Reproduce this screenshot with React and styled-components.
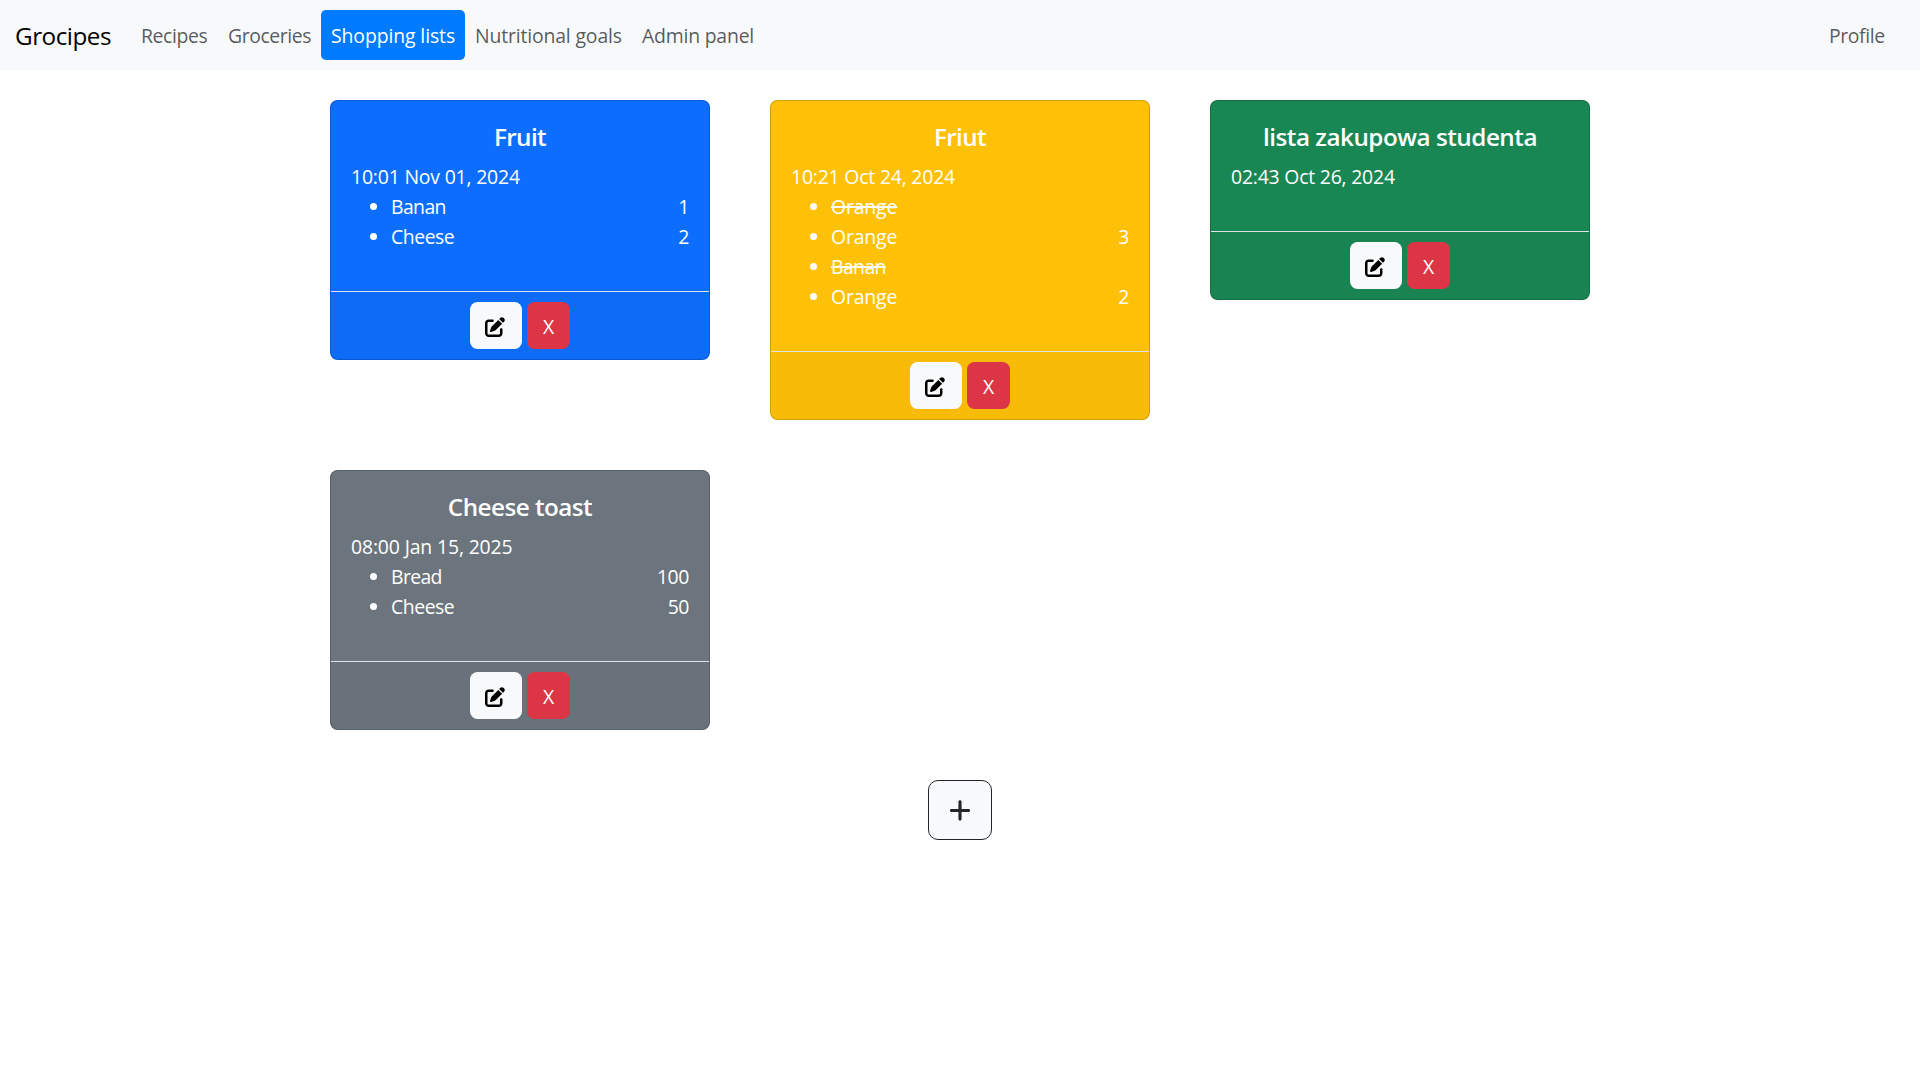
import React from "react";
import styled, { createGlobalStyle } from "styled-components";
import { FaPenToSquare, FaPlus } from "react-icons/fa6";

const GlobalStyle = createGlobalStyle`
  *, *::before, *::after { box-sizing: border-box; }
  body {
    margin: 0;
    background: #fff;
    color: #212529;
    font-family: "Open Sans", "Noto Sans", sans-serif;
    font-size: 19.4px;
    line-height: 30px;
  }
`;

const Navbar = styled.nav`
  display: flex;
  align-items: center;
  height: 70px;
  padding: 10px 25px 10px 15px;
  background: #f8f9fa;
`;

const Brand = styled.a`
  width: 96px;
  margin-right: 20px;
  padding-top: 2px;
  color: #000;
  font-size: 24.25px;
  line-height: 38px;
  letter-spacing: -0.49px;
  white-space: nowrap;
`;

const NavLinks = styled.div`
  display: flex;
  flex: 1;
`;

const NavLink = styled.a`
  width: ${(p) => p.$width}px;
  height: 50px;
  padding: 11px 10px 9px;
  border-radius: 5px;
  white-space: nowrap;
  letter-spacing: ${(p) => p.$track}px;
  color: ${(p) => (p.$active ? "#fff" : "rgba(33, 37, 41, 0.75)")};
  background: ${(p) => (p.$active ? "#007bff" : "transparent")};
`;

const Board = styled.main`
  display: grid;
  grid-template-columns: repeat(3, 380px);
  column-gap: 60px;
  row-gap: 50px;
  align-items: start;
  width: 1260px;
  margin: 30px auto 50px;
`;

const Card = styled.article`
  display: flex;
  flex-direction: column;
  border: 1px solid rgba(0, 0, 0, 0.175);
  border-radius: 7.5px;
  background: ${(p) => p.$color};
  color: #fff;
`;

const CardBody = styled.div`
  padding: 21px 20px 19px;
`;

const CardTitle = styled.h5`
  margin: 0 0 10px;
  font-size: 24.25px;
  font-weight: 600;
  line-height: 30px;
  text-align: center;
  letter-spacing: ${(p) => p.$track}px;
`;

const CardDate = styled.div`
  letter-spacing: ${(p) => p.$track}px;
`;

const ItemList = styled.ul`
  margin: 0 0 20px;
  padding: 0 0 0 40px;
`;

const Item = styled.li`
  height: 30px;
`;

const ItemLine = styled.div`
  display: flex;
  justify-content: space-between;
`;

const ItemName = styled.span`
  letter-spacing: ${(p) => p.$track}px;
  text-decoration: ${(p) => (p.$done ? "line-through 2px" : "none")};
`;

const Amount = styled.span`
  letter-spacing: -0.4px;
`;

const CardFooter = styled.footer`
  display: flex;
  justify-content: center;
  gap: 5px;
  padding: 10px;
  border-top: 1px solid #dee2e6;
  border-radius: 0 0 6.5px 6.5px;
  background: rgba(33, 37, 41, 0.03);
`;

const Button = styled.button`
  display: flex;
  align-items: center;
  justify-content: center;
  width: ${(p) => p.$width}px;
  height: 47px;
  padding: ${(p) => (p.$danger ? "2px 0 0" : "2px 2px 0 0")};
  border: 0;
  border-radius: 7.5px;
  font: inherit;
  color: ${(p) => (p.$danger ? "#fff" : "#000")};
  background: ${(p) => (p.$danger ? "#dc3545" : "#f8f9fa")};
`;

const AddRow = styled.div`
  display: flex;
  justify-content: center;
`;

const AddButton = styled.button`
  display: flex;
  align-items: center;
  justify-content: center;
  width: 64px;
  height: 60px;
  padding: 1px 0 0;
  border: 1px solid #212529;
  border-radius: 10px;
  background: #f8f9fa;
  color: #212529;
`;

const PlusIcon = styled(FaPlus)`
  width: 26px;
  height: 25px;
`;

const links = [
  { label: "Recipes", width: 87, track: -0.38 },
  { label: "Groceries", width: 103, track: -0.42 },
  { label: "Shopping lists", width: 144, track: -0.1, active: true },
  { label: "Nutritional goals", width: 167, track: -0.15 },
  { label: "Admin panel", width: 132, track: -0.2 },
];

const tracking = { Banan: -0.6, Cheese: -0.45, Orange: -0.15, Bread: -0.65 };

const lists = [
  {
    title: "Fruit", titleTrack: -0.6, color: "#0d6efd",
    date: "10:01 Nov 01, 2024", dateTrack: -0.18,
    items: [{ name: "Banan", amount: 1 }, { name: "Cheese", amount: 2 }],
  },
  {
    title: "Friut", titleTrack: -0.6, color: "#ffc107",
    date: "10:21 Oct 24, 2024", dateTrack: -0.19,
    items: [
      { name: "Orange", done: true },
      { name: "Orange", amount: 3 },
      { name: "Banan", done: true },
      { name: "Orange", amount: 2 },
    ],
  },
  {
    title: "lista zakupowa studenta", titleTrack: -0.49, color: "#198754",
    date: "02:43 Oct 26, 2024", dateTrack: -0.2,
    items: [],
  },
  {
    title: "Cheese toast", titleTrack: -0.52, color: "#6c757d",
    date: "08:00 Jan 15, 2025", dateTrack: -0.14,
    items: [{ name: "Bread", amount: 100 }, { name: "Cheese", amount: 50 }],
  },
];

function ShoppingList({ list }) {
  return (
    <Card $color={list.color}>
      <CardBody>
        <CardTitle $track={list.titleTrack}>{list.title}</CardTitle>
        <CardDate $track={list.dateTrack}>{list.date}</CardDate>
        <ItemList>
          {list.items.map((item, i) => (
            <Item key={i}>
              <ItemLine>
                <ItemName $done={item.done} $track={tracking[item.name]}>{item.name}</ItemName>
                <Amount>{item.amount}</Amount>
              </ItemLine>
            </Item>
          ))}
        </ItemList>
      </CardBody>
      <CardFooter>
        <Button $width={52} aria-label="Edit"><FaPenToSquare size={20} /></Button>
        <Button $width={43} $danger>X</Button>
      </CardFooter>
    </Card>
  );
}

export default function App() {
  return (
    <>
      <GlobalStyle />
      <Navbar>
        <Brand>Grocipes</Brand>
        <NavLinks>
          {links.map((l) => (
            <NavLink key={l.label} $width={l.width} $track={l.track} $active={l.active}>{l.label}</NavLink>
          ))}
        </NavLinks>
        <NavLink $width={76} $track={-0.38}>Profile</NavLink>
      </Navbar>
      <Board>
        {lists.map((list) => <ShoppingList key={list.title} list={list} />)}
      </Board>
      <AddRow>
        <AddButton aria-label="Add list"><PlusIcon /></AddButton>
      </AddRow>
    </>
  );
}
